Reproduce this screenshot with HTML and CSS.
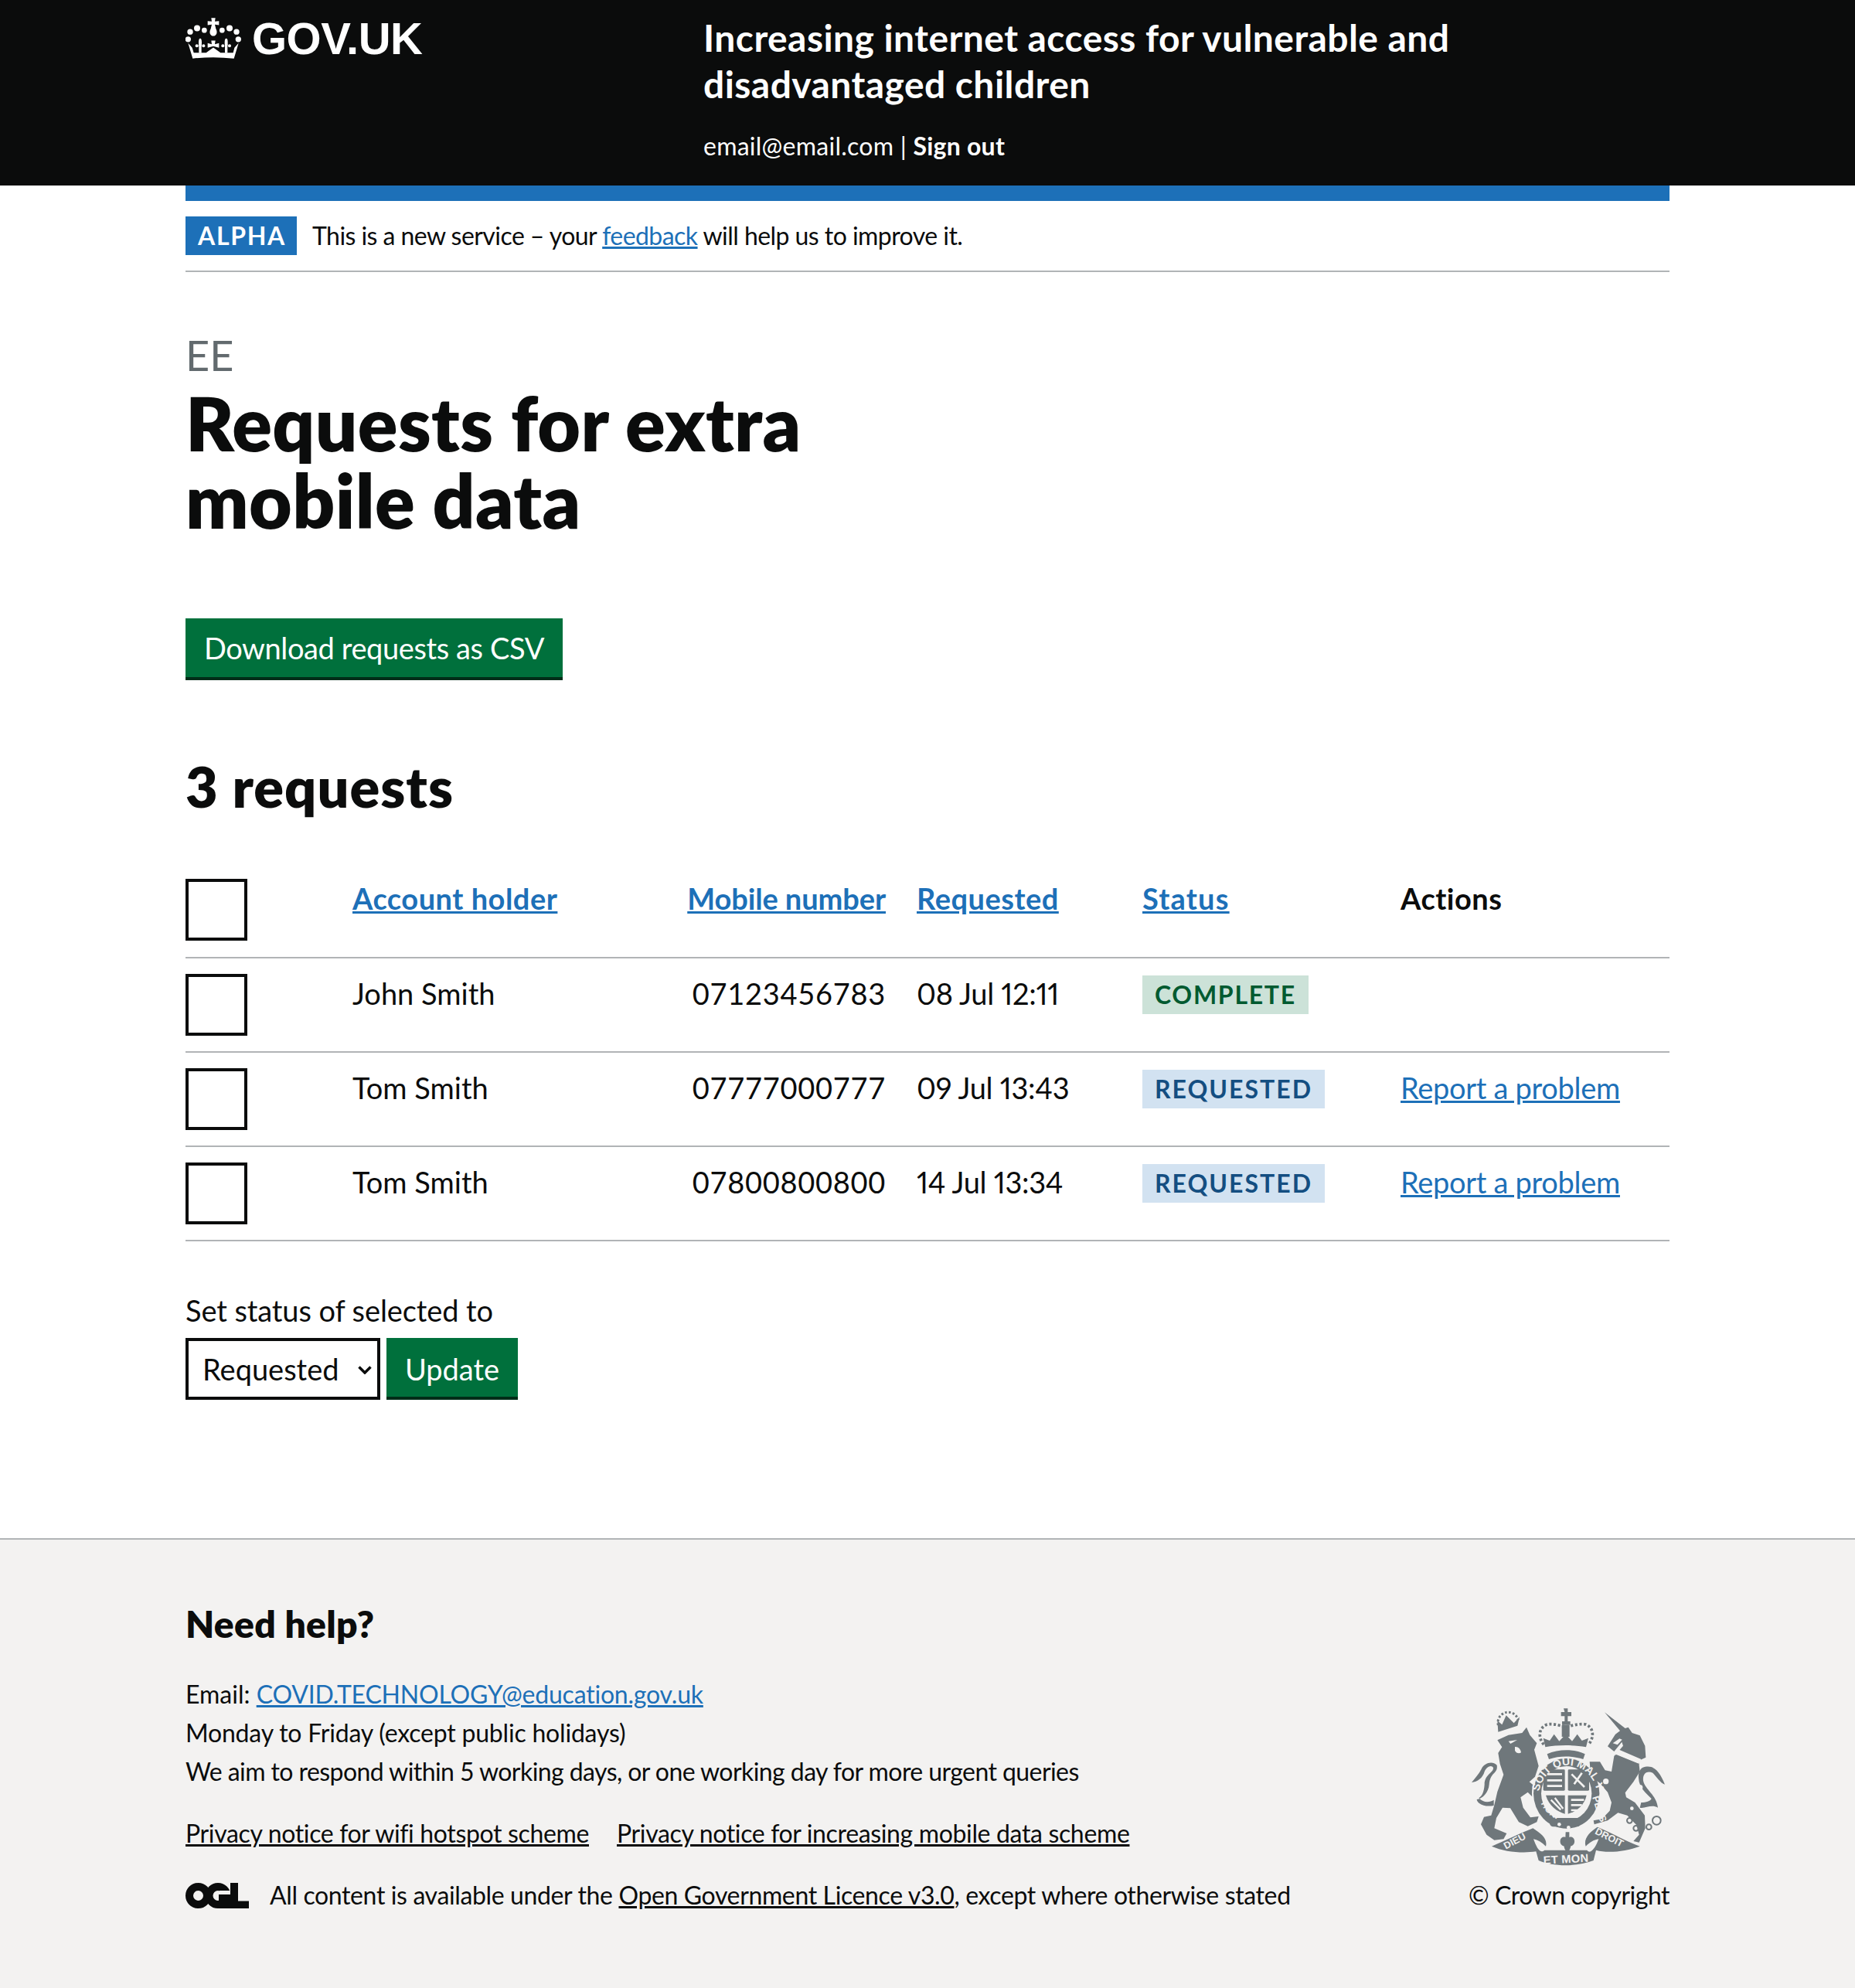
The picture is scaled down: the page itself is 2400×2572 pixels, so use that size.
FILE: index.html
```html
<!DOCTYPE html>
<html lang="en">
<head>
<meta charset="utf-8">
<title>Requests for extra mobile data</title>
<link rel="stylesheet" href="styles.css">
</head>
<body>
<header class="site-header">
  <div class="container header-inner">
    <div class="logo">
      <svg class="crown" viewBox="60 70 216 158" aria-hidden="true">
        <g fill="#fff">
          <circle cx="105" cy="110" r="12"/><circle cx="133" cy="118" r="10"/><circle cx="202" cy="118" r="10"/><circle cx="231" cy="110" r="12"/>
          <circle cx="78" cy="124" r="11"/><circle cx="258" cy="124" r="11"/><circle cx="70" cy="153" r="11"/><circle cx="265" cy="153" r="11"/>
          <path d="M160,70h16l-2,14 16,-2v16l-16,-2 4,16c8,14 2,28 -10,28s-18,-14 -10,-28l4,-16 -16,2V82l16,2z"/>
          <path d="M70,168L86,186L92,205H140L168,185L196,205H245L250,186L266,168L248,228Q168,218 88,228Z"/>
          <ellipse cx="117" cy="166" rx="6" ry="16"/><circle cx="104" cy="178" r="6"/><circle cx="130" cy="178" r="6"/><rect x="112" y="172" width="10" height="34"/>
          <ellipse cx="218" cy="166" rx="6" ry="16"/><circle cx="205" cy="178" r="6"/><circle cx="231" cy="178" r="6"/><rect x="213" y="172" width="10" height="34"/>
          <path d="M160,158h16l-2,14 16,-4v18l-22,-6 -22,6v-18l16,4z"/>
        </g>
      </svg>
      <span class="logotype">GOV.UK</span>
    </div>
    <div class="service">
      <div class="service-name">Increasing internet access for vulnerable and disadvantaged children</div>
      <div class="account">email@email.com | <strong>Sign out</strong></div>
    </div>
  </div>
</header>

<div class="container">
  <div class="blue-bar"></div>
  <div class="phase">
    <span class="tag tag-alpha">Alpha</span>
    <span class="phase-text">This is a new service – your <a href="#">feedback</a> will help us to improve it.</span>
  </div>

  <main class="main">
    <div class="caption">EE</div>
    <h1 class="title">Requests for extra<br>mobile data</h1>
    <a class="button" href="#">Download requests as CSV</a>
    <h2 class="count">3 requests</h2>

    <table class="table">
      <colgroup>
        <col class="c1"><col class="c2"><col class="c3"><col class="c4"><col class="c5"><col class="c6">
      </colgroup>
      <thead>
        <tr>
          <th><input class="check" type="checkbox" aria-label="Select all"></th>
          <th><a href="#">Account holder</a></th>
          <th class="num"><a href="#">Mobile number</a></th>
          <th><a href="#">Requested</a></th>
          <th class="wide"><a href="#">Status</a></th>
          <th>Actions</th>
        </tr>
      </thead>
      <tbody>
        <tr>
          <td><input class="check" type="checkbox" aria-label="Select"></td>
          <td>John Smith</td>
          <td class="num digits">07123456783</td>
          <td class="date">08 Jul 12:11</td>
          <td><span class="tag tag-complete">Complete</span></td>
          <td></td>
        </tr>
        <tr>
          <td><input class="check" type="checkbox" aria-label="Select"></td>
          <td>Tom Smith</td>
          <td class="num digits">07777000777</td>
          <td class="date">09 Jul 13:43</td>
          <td><span class="tag tag-requested">Requested</span></td>
          <td class="action"><a href="#">Report a problem</a></td>
        </tr>
        <tr>
          <td><input class="check" type="checkbox" aria-label="Select"></td>
          <td>Tom Smith</td>
          <td class="num digits">07800800800</td>
          <td class="date">14 Jul 13:34</td>
          <td><span class="tag tag-requested">Requested</span></td>
          <td class="action"><a href="#">Report a problem</a></td>
        </tr>
      </tbody>
    </table>

    <form class="status-form">
      <label class="status-label" for="status">Set status of selected to</label>
      <div class="status-row">
        <div class="select-wrap">
          <select class="select" id="status"><option>Requested</option><option>Complete</option></select>
          <svg class="chevron" viewBox="0 0 18 11" aria-hidden="true"><path d="M1.500 1.500L9 9l7.500-7.500" fill="none" stroke="#0b0c0c" stroke-width="3.500"/></svg>
        </div>
        <button class="button button-small" type="button">Update</button>
      </div>
    </form>
  </main>
</div>

<footer class="footer">
  <div class="container footer-inner">
    <div class="footer-left">
      <h2 class="help">Need help?</h2>
      <p class="footer-line">Email: <a class="blue" href="#">COVID.TECHNOLOGY@education.gov.uk</a></p>
      <p class="footer-line snug">Monday to Friday (except public holidays)</p>
      <p class="footer-line tight">We aim to respond within 5 working days, or one working day for more urgent queries</p>
      <div class="footer-links">
        <a href="#">Privacy notice for wifi hotspot scheme</a>
        <a href="#">Privacy notice for increasing mobile data scheme</a>
      </div>
      <div class="licence">
        <svg class="ogl" viewBox="0 0 82 33" role="img" aria-label="Open Government Licence">
          <circle cx="16.500" cy="16.500" r="11.500" fill="none" stroke="#0b0c0c" stroke-width="10"/>
          <circle cx="42" cy="16.500" r="11.500" fill="none" stroke="#0b0c0c" stroke-width="10"/>
          <rect x="43" y="15" width="15" height="18" fill="#0b0c0c"/>
          <rect x="44" y="10" width="14" height="5" fill="#f3f2f1"/>
          <rect x="58" y="0" width="10" height="33" fill="#0b0c0c"/>
          <rect x="58" y="23.500" width="24" height="9.500" fill="#0b0c0c"/>
        </svg>
        <span>All content is available under the <a href="#">Open Government Licence v3.0</a>, except where otherwise stated</span>
      </div>
    </div>
    <div class="footer-right">
      <svg class="crest" viewBox="72 55 750 610" role="img" aria-label="Royal coat of arms">
        <defs>
          <path id="garterTop" d="M332,400 A112,122 0 0 1 560,400"/>
          <path id="garterBottom" d="M340,420 A112,122 0 0 0 545,420"/>
        </defs>
        <g fill="#6f777b">
          <path d="M172,178L215,158L268,150L285,128L298,158L325,190L315,215L332,278L318,320L296,340L335,372L345,405L322,412L290,380L262,400L272,440L300,478L332,474L325,496L290,512L255,496L222,442L192,440L168,480L160,520L208,540L196,562L160,566L130,545L108,505L120,476L148,470L160,430L172,378L196,312L182,270L175,228L190,205Z"/>
          <path d="M158,432C115,440 92,420 92,408C115,405 138,380 140,350C145,300 175,310 170,275C150,255 118,270 110,290C100,310 85,325 72,342C95,340 115,325 122,300C130,280 150,272 156,285C158,305 122,310 122,350C120,380 112,395 100,402C120,425 145,418 158,410Z"/>
          <path d="M175,146L250,122L258,88L236,112L206,82L190,118L172,102Z"/>
        </g>
        <ellipse cx="440" cy="385" rx="134" ry="142" fill="#f3f2f1"/>
        <g fill="#6f777b">
          <ellipse cx="440" cy="385" rx="128" ry="136"/>
          <path d="M358,205L350,170L375,180L392,155L412,182L437,155L462,182L482,155L500,180L525,170L516,205C470,196 405,196 358,205Z"/>
          <path d="M365,232C410,212 470,212 512,232L505,252C460,238 415,238 372,252Z"/>
          <path d="M429,55h16v14h14v16h-14v20h10v14h-32v-14h10v-20h-14v-16h14z"/>
          <rect x="422" y="120" width="30" height="45"/>
          <path d="M588,70L668,132L680,128L695,150L725,160L745,200L748,245L720,258L725,300L700,340L668,382L672,400L706,420L744,470L746,520L722,575L700,570L722,545L712,508L676,470L640,460L600,490L548,505L545,490L578,484L608,452L615,420L600,380L570,345L535,320L530,262L570,262L590,295L615,300L625,240L660,200L655,185L625,222L600,202L630,155L648,142Z"/>
          <path d="M735,285C775,270 800,295 822,350C805,345 790,320 775,305C755,295 735,305 738,335C745,370 790,390 795,440C770,425 745,445 725,440L730,420C750,420 765,415 770,405C750,385 722,365 720,325C718,305 725,292 735,285Z"/>
          <path d="M150,590C200,570 270,535 310,520C340,540 368,560 360,590C345,575 330,565 312,562C325,595 335,620 355,605L520,605C535,625 555,590 565,562C545,565 530,575 515,590C505,560 530,535 560,515C610,535 670,570 725,590C670,610 600,618 555,605L545,645C480,670 390,670 332,645L322,610C270,618 200,612 150,590Z"/>
          <path d="M437,535h14v20c8,-4 18,0 20,12c2,12 -6,22 -14,22c-2,10 -8,24 -13,26c-6,-2 -12,-16 -14,-26c-8,0 -16,-10 -14,-22c2,-12 12,-16 20,-12z"/>
        </g>
        <g fill="#f3f2f1">
          <ellipse cx="440" cy="385" rx="98" ry="106"/>
          <path d="M215,182l34,-5-26,15z"/><path d="M240,204c12,-2 22,8 24,22c-8,6 -20,2 -24,-8z"/>
          <path d="M620,190l26,-18 10,4-18,20z"/>
          <circle cx="603" cy="252" r="11"/><circle cx="593" cy="338" r="11"/><circle cx="725" cy="362" r="11"/><circle cx="716" cy="408" r="8"/><circle cx="694" cy="443" r="7"/>
          <path d="M630,235l90,35 10,-18-92,-40z"/>
        </g>
        <g fill="none" stroke="#6f777b" stroke-width="6">
          <circle cx="685" cy="490" r="10"/><circle cx="710" cy="520" r="10"/><circle cx="760" cy="515" r="10"/><circle cx="790" cy="490" r="16"/>
          <path d="M175,120a33,33 0 0 1 78,-20" stroke-dasharray="8 7" stroke-width="9"/>
          <path d="M352,195C330,170 330,130 365,117C395,112 420,125 437,125C455,125 485,112 515,117C548,130 548,170 525,195" stroke-dasharray="9 8" stroke-width="11"/>
          <path d="M632,238l88,36" stroke-width="8"/>
        </g>
        <g fill="#6f777b">
          <rect x="350" y="292" width="84" height="82" rx="4"/>
          <rect x="446" y="292" width="82" height="82" rx="4"/>
          <path d="M360,392h74v72c-28,-8 -62,-30 -74,-72z"/>
          <path d="M446,392h72c-8,40 -42,64 -72,72z"/>
          <rect x="375" y="480" width="120" height="34" rx="14"/>
        </g>
        <g fill="#f3f2f1">
          <path d="M365,310h58M365,334h58M365,356h58" stroke="#f3f2f1" stroke-width="8"/>
          <path d="M460,310l50,50M500,305l-30,44" stroke="#f3f2f1" stroke-width="8"/>
          <path d="M380,410l38,38M395,402l32,42" stroke="#f3f2f1" stroke-width="7"/>
          <path d="M458,410h50M458,430h42M458,450h24" stroke="#f3f2f1" stroke-width="8"/>
          <circle cx="412" cy="505" r="7"/><circle cx="448" cy="517" r="7"/>
        </g>
        <g class="crest-text">
          <text font-size="42"><textPath href="#garterTop" startOffset="6%">SOIT QUI MAL Y</textPath></text>
          <text font-size="36"><textPath href="#garterBottom" startOffset="1%">HONI</textPath></text>
          <text font-size="38" transform="rotate(72 540 400)" x="540" y="400">PENSE</text>
          <text font-size="44" x="350" y="655" textLength="175" transform="rotate(-3 437 640)">ET MON</text>
          <text font-size="38" x="205" y="602" transform="rotate(-28 205 602)">DIEU</text>
          <text font-size="38" x="548" y="540" transform="rotate(27 548 540)">DROIT</text>
        </g>
      </svg>
      <div class="copyright">© Crown copyright</div>
    </div>
  </div>
</footer>
</body>
</html>
```

FILE: styles.css
```css
* { box-sizing: border-box; }
html, body { margin: 0; padding: 0; }
body {
  font-family: Lato, "Liberation Sans", sans-serif;
  color: #0b0c0c;
  background: #fff;
  font-size: 38px;
  line-height: 50px;
  min-height: 2572px;
  display: flex;
  flex-direction: column;
}
a { color: #1d70b8; }
.container { width: 1920px; margin: 0 auto; }

.site-header { background: #0b0c0c; color: #fff; height: 240px; }
.header-inner { display: flex; }
.logo { width: 670px; display: flex; align-items: flex-start; padding-top: 23px; }
.crown { width: 72px; height: 53px; display: block; }
.logotype {
  font-family: "Liberation Sans", Arial, sans-serif;
  font-weight: 700;
  font-size: 58px;
  line-height: 54px;
  margin-left: 14px;
  letter-spacing: -0.5px;
}
.service { width: 1040px; padding-top: 19px; }
.service-name { font-size: 48px; line-height: 60px; font-weight: 700; letter-spacing: 0.44px; }
.account { font-size: 32px; line-height: 50px; margin-top: 25px; letter-spacing: 0.25px; }

.blue-bar { height: 20px; background: #1d70b8; }
.phase { display: flex; align-items: flex-start; padding: 20px 0; height: 92px; border-bottom: 2px solid #b1b4b6; }
.phase-text { font-size: 32px; line-height: 50px; margin-left: 20px; letter-spacing: -0.55px; }

.tag {
  display: inline-block;
  vertical-align: top;
  font-size: 32px;
  line-height: 36px;
  font-weight: 700;
  letter-spacing: 1.7px;
  text-transform: uppercase;
  padding: 7px 16px;
  height: 50px;
}
.tag-alpha { background: #1d70b8; color: #fff; width: 144px; }
.tag-complete { background: #cce2d8; color: #005a30; margin-top: 2px; }
.tag-requested { background: #d2e2f1; color: #144e81; letter-spacing: 2px; margin-top: 2px; }

.main { padding-top: 78px; padding-bottom: 179px; }
.caption { font-size: 54px; line-height: 60px; color: #626a6e; margin-bottom: 7px; }
.title { font-size: 96px; line-height: 100px; font-weight: 800; margin: 0 0 103px; letter-spacing: 0.35px; }
.button {
  display: inline-block;
  background: #00703c;
  color: #fff;
  font-size: 38px;
  line-height: 50px;
  padding: 13px 0;
  height: 80px;
  border: 0;
  box-shadow: inset 0 -4px 0 #002d18;
  text-decoration: none;
  font-family: inherit;
  width: 488px;
  text-align: center;
  white-space: nowrap;
  letter-spacing: -0.4px;
}
.count { font-size: 72px; line-height: 80px; font-weight: 800; margin: 97px 0 60px; letter-spacing: 1px; }

.table { width: 1920px; border-collapse: collapse; table-layout: fixed; }
.c1 { width: 216px; } .c2 { width: 433px; } .c3 { width: 297px; } .c4 { width: 292px; } .c5 { width: 334px; } .c6 { width: 348px; }
.table th, .table td {
  text-align: left;
  vertical-align: top;
  padding: 20px 40px 20px 0;
  border-bottom: 2px solid #b1b4b6;
  font-size: 38px;
  line-height: 50px;
  height: 122px;
  white-space: nowrap;
}
.table th { font-weight: 700; letter-spacing: 0.5px; }
.table th.num { letter-spacing: -0.1px; }
.table th.wide { letter-spacing: 1.2px; }
.table .num { text-align: right; }
.table .digits { letter-spacing: 0.7px; }
.table .date { font-variant-numeric: proportional-nums; letter-spacing: -0.3px; }
.table .action { letter-spacing: -0.3px; }
.check {
  appearance: none;
  -webkit-appearance: none;
  display: block;
  margin: 0;
  width: 80px;
  height: 80px;
  border: 4px solid #0b0c0c;
  background: #fff;
  border-radius: 0;
}

.status-form { margin-top: 64px; }
.status-label { display: block; line-height: 50px; letter-spacing: -0.1px; }
.status-row { display: flex; gap: 8px; margin-top: 11px; }
.select-wrap { position: relative; width: 252px; height: 80px; }
.select {
  appearance: none;
  -webkit-appearance: none;
  width: 252px;
  height: 80px;
  border: 4px solid #0b0c0c;
  border-radius: 0;
  background: #fff;
  font-family: inherit;
  font-size: 38px;
  padding: 0 0 0 18px;
  color: #0b0c0c;
}
.chevron { position: absolute; left: 223px; top: 36px; width: 18px; height: 11px; pointer-events: none; }
.button-small { width: 170px; padding: 11px 0; letter-spacing: 0; }

.footer { background: #f3f2f1; border-top: 2px solid #b1b4b6; flex: 1; padding-top: 84px; }
.footer-inner { display: flex; justify-content: space-between; align-items: flex-end; font-size: 32px; line-height: 50px; }
.help { font-size: 48px; line-height: 50px; font-weight: 800; margin: 0 0 41px; letter-spacing: 0.3px; }
.footer-line { margin: 0; }
.footer-line.snug { letter-spacing: -0.2px; }
.footer-line.tight { letter-spacing: -0.57px; }
.blue { color: #1d70b8; letter-spacing: -0.2px; }
.footer-links { display: flex; gap: 36px; margin-top: 30px; letter-spacing: -0.35px; }
.footer a:not(.blue) { color: #0b0c0c; }
.licence { display: flex; align-items: center; margin-top: 30px; letter-spacing: -0.37px; }
.ogl { width: 82px; height: 33px; margin-right: 27px; flex: none; }
.footer-right { display: flex; flex-direction: column; align-items: flex-end; }
.crest { width: 250px; height: 204px; display: block; margin: 0 6px 13px 0; }
.copyright { letter-spacing: -0.5px; }
.crest-text { fill: #f3f2f1; font-family: "Liberation Sans", Arial, sans-serif; font-weight: 700; }
```
